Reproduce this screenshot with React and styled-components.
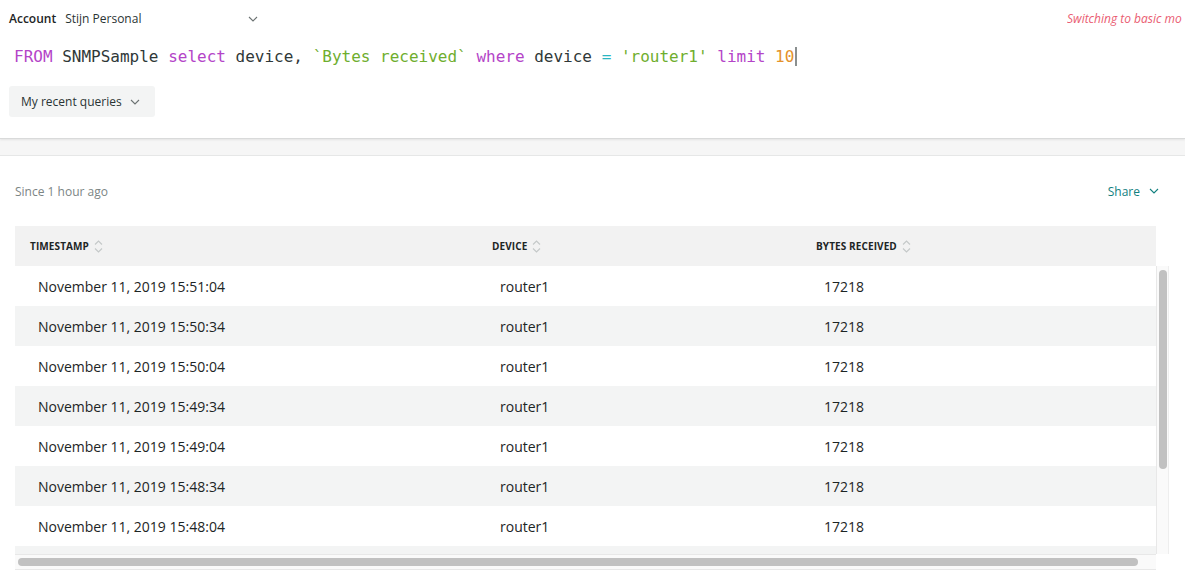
import styled, { createGlobalStyle } from "styled-components";

const GlobalStyle = createGlobalStyle`
  html, body {
    margin: 0;
    padding: 0;
    background: #fff;
    overflow: hidden;
  }
  body {
    font-family: "Open Sans", "Liberation Sans", sans-serif;
    color: #2a3434;
  }
`;

const Page = styled.div`
  width: 1185px;
  height: 579px;
  overflow: hidden;
`;

const QueryPanel = styled.div`
  height: 138px;
  background: #fff;
  border-bottom: 1px solid #d9dada;
  box-shadow: 0 1px 2px rgba(0, 0, 0, 0.08);
  position: relative;
  z-index: 1;
`;

const AccountBar = styled.div`
  display: flex;
  align-items: center;
  height: 37px;
  padding-left: 9px;
  font-size: 12px;
`;

const AccountLabel = styled.span`
  font-weight: 600;
  color: #1d2525;
  margin-right: 9px;
`;

const AccountName = styled.span`
  color: #2a3434;
  width: 183px;
`;

const Warning = styled.span`
  margin-left: auto;
  font-style: italic;
  color: #ea5c72;
  white-space: nowrap;
  width: 118px;
  overflow: hidden;
`;

const Editor = styled.div`
  font-family: "DejaVu Sans Mono", "Liberation Mono", monospace;
  font-size: 16px;
  line-height: 40px;
  padding-left: 14px;
  color: #2f3838;
  white-space: pre;
`;

const Tok = styled.span`
  color: ${(p) =>
    ({
      kw: "#b444c8",
      str: "#6fae2e",
      op: "#2ab6c2",
      num: "#e4922b",
    }[p.$t] || "#2f3838")};
`;

const Caret = styled.span`
  display: inline-block;
  width: 2px;
  height: 19px;
  background: #8a8f8f;
  margin-left: 1px;
  vertical-align: -4px;
`;

const RecentButton = styled.button`
  margin: 9px 0 0 9px;
  height: 31px;
  width: 146px;
  border: none;
  border-radius: 3px;
  background: #f3f4f4;
  font-family: inherit;
  font-size: 12px;
  color: #2a3434;
  display: flex;
  align-items: center;
  padding: 0 0 0 12px;
  gap: 8px;
`;

const Band = styled.div`
  height: 16px;
  background: #f6f6f6;
  border-bottom: 1px solid #e6e7e7;
`;

const Results = styled.div`
  padding: 0 0 0 15px;
`;

const ResultsBar = styled.div`
  display: flex;
  align-items: center;
  height: 70px;
  padding-right: 26px;
  font-size: 12px;
`;

const Since = styled.span`
  color: #7c8585;
`;

const Share = styled.span`
  margin-left: auto;
  color: #12807f;
  display: flex;
  align-items: center;
  gap: 9px;
`;

const Table = styled.div`
  width: 1156px;
`;

const cols = "462px 324px 1fr";

const HeaderRow = styled.div`
  display: grid;
  grid-template-columns: ${cols};
  width: 1141px;
  height: 40px;
  background: #f2f2f2;
  align-items: center;
`;

const HeaderCell = styled.div`
  padding-left: 15px;
  font-size: 10px;
  font-weight: 700;
  color: #1d2525;
  display: flex;
  align-items: center;
  gap: 5px;
  letter-spacing: 0.1px;
`;

const BodyWrap = styled.div`
  display: flex;
`;

const BodyColumn = styled.div`
  width: 1141px;
  display: flex;
  flex-direction: column;
`;

const Rows = styled.div`
  height: 288px;
  overflow: hidden;
`;

const Row = styled.div`
  display: grid;
  grid-template-columns: ${cols};
  height: 40px;
  align-items: center;
  background: ${(p) => (p.$odd ? "#f3f4f4" : "#fff")};
  font-size: 14px;
  color: #1d2525;
`;

const Cell = styled.div`
  padding-left: 23px;
`;

const HTrack = styled.div`
  height: 14px;
  border-top: 1px solid #e8e8e8;
  border-bottom: 1px solid #e8e8e8;
  background: #fafafa;
  display: flex;
  align-items: center;
  padding-left: 3px;
`;

const HThumb = styled.div`
  width: 1120px;
  height: 8px;
  border-radius: 4px;
  background: #c1c1c1;
`;

const VTrack = styled.div`
  width: 13px;
  height: 288px;
  border-left: 1px solid #e8e8e8;
  border-right: 1px solid #eeeeee;
  background: #fafafa;
  display: flex;
  justify-content: center;
  padding-top: 4px;
  box-sizing: border-box;
`;

const VThumb = styled.div`
  width: 8px;
  height: 199px;
  border-radius: 4px;
  background: #c1c1c1;
`;

const Chevron = ({ color = "#6c7373", size = 10 }) => (
  <svg width={size} height={size * 0.6} viewBox="0 0 10 6" fill="none">
    <path d="M1 1l4 4 4-4" stroke={color} strokeWidth="1.1" />
  </svg>
);

const SortIcon = () => (
  <svg width="9" height="15" viewBox="0 0 9 15" fill="none">
    <path d="M1 5.5l3.5-3.5 3.5 3.5M1 9.5l3.5 3.5 3.5-3.5" stroke="#c4c8c8" strokeWidth="1.1" />
  </svg>
);

const times = [
  "15:51:04",
  "15:50:34",
  "15:50:04",
  "15:49:34",
  "15:49:04",
  "15:48:34",
  "15:48:04",
];

export default function App() {
  return (
    <Page>
      <GlobalStyle />
      <QueryPanel>
        <AccountBar>
          <AccountLabel>Account</AccountLabel>
          <AccountName>Stijn Personal</AccountName>
          <Chevron />
          <Warning>Switching to basic mo</Warning>
        </AccountBar>
        <Editor>
          <Tok $t="kw">FROM</Tok> SNMPSample <Tok $t="kw">select</Tok> device,{" "}
          <Tok $t="str">`Bytes received`</Tok> <Tok $t="kw">where</Tok> device{" "}
          <Tok $t="op">=</Tok> <Tok $t="str">'router1'</Tok> <Tok $t="kw">limit</Tok>{" "}
          <Tok $t="num">10</Tok>
          <Caret />
        </Editor>
        <RecentButton>
          My recent queries
          <Chevron />
        </RecentButton>
      </QueryPanel>
      <Band />
      <Results>
        <ResultsBar>
          <Since>Since 1 hour ago</Since>
          <Share>
            Share
            <Chevron color="#12807f" />
          </Share>
        </ResultsBar>
        <Table>
          <HeaderRow>
            <HeaderCell>
              TIMESTAMP <SortIcon />
            </HeaderCell>
            <HeaderCell>
              DEVICE <SortIcon />
            </HeaderCell>
            <HeaderCell>
              BYTES RECEIVED <SortIcon />
            </HeaderCell>
          </HeaderRow>
          <BodyWrap>
            <BodyColumn>
              <Rows>
                {times.map((t, i) => (
                  <Row key={t} $odd={i % 2 === 1}>
                    <Cell>November 11, 2019 {t}</Cell>
                    <Cell>router1</Cell>
                    <Cell>17218</Cell>
                  </Row>
                ))}
                <Row $odd />
              </Rows>
              <HTrack>
                <HThumb />
              </HTrack>
            </BodyColumn>
            <VTrack>
              <VThumb />
            </VTrack>
          </BodyWrap>
        </Table>
      </Results>
    </Page>
  );
}
